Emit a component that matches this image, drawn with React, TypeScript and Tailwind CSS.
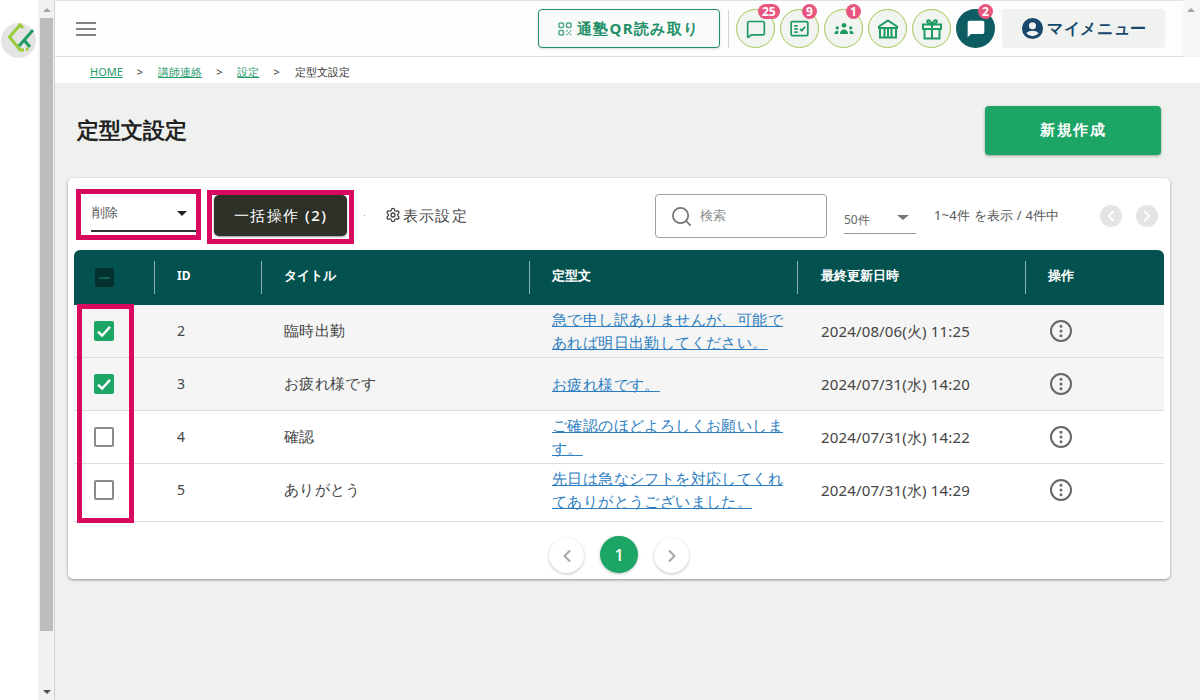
import React from "react";
import { ChevronLeft, ChevronRight, EllipsisVertical, Search, Settings, MessageSquare } from "lucide-react";

const rows = [
  { id: 2, title: "臨時出勤", body: ["急で申し訳ありませんが、可能で", "あれば明日出勤してください。"], date: "2024/08/06(火) 11:25", checked: true, h: "h-[53px]" },
  { id: 3, title: "お疲れ様です", body: ["お疲れ様です。"], date: "2024/07/31(水) 14:20", checked: true, h: "h-[53px]" },
  { id: 4, title: "確認", body: ["ご確認のほどよろしくお願いしま", "す。"], date: "2024/07/31(水) 14:22", checked: false, h: "h-[53px]" },
  { id: 5, title: "ありがとう", body: ["先日は急なシフトを対応してくれ", "てありがとうございました。"], date: "2024/07/31(水) 14:29", checked: false, h: "h-[58px]" },
];

const CircleBtn = ({ badge, children }: { badge?: string; children: React.ReactNode }) => (
  <div className="relative w-[39px] h-[39px] rounded-full border border-[#a3c94f] bg-[#f1f4f0] flex items-center justify-center text-[#1f9a63]">
    {children}
    {badge && (
      <span className="absolute top-[-6px] left-[21px] h-[15px] min-w-[15px] px-[4px] rounded-full bg-[#e8557f] text-white text-[12px] font-bold leading-[15px] text-center">
        {badge}
      </span>
    )}
  </div>
);

const Check = ({ checked }: { checked: boolean }) =>
  checked ? (
    <div className="w-5 h-5 rounded-[2px] bg-[#1da566] flex items-center justify-center">
      <svg width="18" height="18" viewBox="0 0 24 24" fill="none" stroke="white" strokeWidth="3.2">
        <path d="M4 13l5.5 5L20 6.5" />
      </svg>
    </div>
  ) : (
    <div className="w-5 h-5 rounded-[2px] border-2 border-[#8a8a8a] bg-white" />
  );

export default function App() {
  return (
    <div className="relative w-[1200px] h-[700px] overflow-hidden bg-[#eff1ee] font-['Roboto','Noto_Sans_CJK_JP',sans-serif] text-[#333]">
      {/* left rail */}
      <div className="absolute left-0 top-0 w-[38px] h-full bg-white">
        <div className="absolute left-[1px] top-[23px] w-[35px] h-[35px] rounded-full bg-[#e4e5e3]" />
        <svg className="absolute left-0 top-[21px]" width="38" height="40" viewBox="0 0 38 40" fill="none" strokeWidth="3">
          <path d="M23 7l-3-3L9.500 16l7.500 9 3 4h4" stroke="#9ccb3b" />
          <path d="M33 9L19 25" stroke="#1f9a63" />
          <path d="M24 19l6 7" stroke="#1f9a63" />
          <path d="M26 28h2.500" stroke="#9ccb3b" />
        </svg>
      </div>
      {/* scrollbar */}
      <div className="absolute left-[38px] top-0 w-[16px] h-full bg-[#f1f1f1]">
        <div className="absolute left-[2px] top-[18px] w-[13px] h-[613px] bg-[#bdbebc]" />
        <div className="absolute left-[5px] top-[8px] w-0 h-0 border-x-[4px] border-x-transparent border-b-[4px] border-b-[#a3a3a3]" />
        <div className="absolute left-[5px] top-[690px] w-0 h-0 border-x-[4px] border-x-transparent border-t-[4px] border-t-[#505050]" />
      </div>
      <div className="absolute left-[54px] top-0 w-px h-full bg-[#d2d3d1]" />

      {/* header */}
      <header className="absolute left-[55px] top-0 w-[1128px] h-[57px] bg-[#fdfdfd] border-t border-t-[#e2e2e2] border-b border-b-[#dcdcdc] flex items-center">
        <div className="absolute left-[21px] top-[21px] w-[20px] flex flex-col gap-[4px]">
          <div className="h-[2px] bg-[#808080]" />
          <div className="h-[2px] bg-[#808080]" />
          <div className="h-[2px] bg-[#808080]" />
        </div>
        <div className="absolute left-[483px] top-[8px] w-[182px] h-[39px] rounded-[4px] border border-[#1f8f68] bg-[#f8fbf9] flex items-center pl-[19px] gap-[5px] text-[#1f8f68] font-bold text-[15px] tracking-[1.3px] shadow-sm">
          <svg width="14" height="14" viewBox="0 0 14 14" fill="none" stroke="#55a888" strokeWidth="1.500">
            <rect x="1" y="1" width="4.500" height="4.500" rx="1" />
            <rect x="8.500" y="1" width="4.500" height="4.500" rx="1" />
            <rect x="1" y="8.500" width="4.500" height="4.500" rx="1" />
            <path d="M8.500 8.500l4.500 4.500M13 8.500l-4.500 4.500" strokeDasharray="1.500 1" />
          </svg>
          <span className="leading-[20px] mt-[-2px]">通塾QR読み取り</span>
        </div>
        <div className="absolute left-[673px] top-[9px] w-px h-[38px] bg-[#d5d5d5]" />
        <div className="absolute left-[681px] top-[8px] flex gap-[5px]">
          <CircleBtn badge="25"><MessageSquare size={20} strokeWidth={2} /></CircleBtn>
          <CircleBtn badge="9">
            <svg width="21" height="21" viewBox="0 0 24 24" fill="none" stroke="currentColor" strokeWidth="2">
              <rect x="2.500" y="4" width="19" height="16" rx="1.500" />
              <path d="M6 9h4M6 12.500h4M6 16h4" />
              <path d="M12.500 12.500l2 2 4-4.500" />
            </svg>
          </CircleBtn>
          <CircleBtn badge="1">
            <svg width="22" height="22" viewBox="0 0 24 24" fill="currentColor">
              <circle cx="12" cy="8" r="2.600" />
              <circle cx="4.600" cy="10.800" r="1.800" />
              <circle cx="19.400" cy="10.800" r="1.800" />
              <path d="M7.500 17.500c0-3 2-5 4.500-5s4.500 2 4.500 5z" />
              <path d="M1.500 17.500c0-2 1.200-3.500 3-3.500.7 0 1.200.2 1.700.5-.4.900-.6 1.900-.6 3z" />
              <path d="M22.500 17.500c0-2-1.200-3.500-3-3.500-.7 0-1.200.2-1.700.5.4.900.6 1.900.6 3z" />
            </svg>
          </CircleBtn>
          <CircleBtn>
            <svg width="24" height="24" viewBox="0 0 24 24" fill="none" stroke="currentColor" strokeWidth="2">
              <path d="M12 3.500l9 6v1.500H3V9.500z" />
              <path d="M4 11v9.500h16V11" />
              <path d="M8.500 11v9.500M12 11v9.500M15.500 11v9.500" />
            </svg>
          </CircleBtn>
          <CircleBtn>
            <svg width="24" height="24" viewBox="0 0 24 24" fill="none" stroke="currentColor" strokeWidth="2">
              <rect x="3" y="7.500" width="18" height="4.500" />
              <path d="M4.500 12v9.500h15V12" />
              <path d="M12 7.500v14" />
              <path d="M12 7.500C10.500 4 9 3 7.800 3.500S7 7 12 7.500zM12 7.500c1.500-3.500 3-4.500 4.200-4S17 7 12 7.500z" />
            </svg>
          </CircleBtn>
          <div className="relative w-[39px] h-[39px] rounded-full bg-[#0d5d63] flex items-center justify-center">
            <svg width="20" height="20" viewBox="0 0 24 24" fill="white">
              <path d="M4 2h16a2 2 0 012 2v12a2 2 0 01-2 2H6l-4 4V4a2 2 0 012-2z" />
            </svg>
            <span className="absolute top-[-5px] left-[22px] w-[15px] h-[15px] rounded-full bg-[#e8557f] text-white text-[12px] font-bold leading-[15px] text-center">2</span>
          </div>
        </div>
        <div className="absolute left-[947px] top-[8px] w-[163px] h-[39px] rounded-[4px] bg-[#eff2ef] flex items-center pl-[19px] gap-[3px] text-[#17476b] font-bold text-[16px] tracking-[0.7px]">
          <svg width="23" height="23" viewBox="0 0 24 24" fill="#17476b">
            <path d="M12 1a11 11 0 100 22 11 11 0 000-22zm0 4.500a3.700 3.700 0 110 7.400 3.700 3.700 0 010-7.400zM12 20a8.600 8.600 0 01-6.500-3c1.300-1.900 4.200-2.700 6.500-2.700s5.200.8 6.500 2.700A8.600 8.600 0 0112 20z" />
          </svg>
          <span className="leading-[20px] mt-[-2px]">マイメニュー</span>
        </div>
      </header>
      <div className="absolute left-[1183px] top-0 w-[17px] h-[56px] bg-[#f6f6f6]">
        <div className="absolute left-[4px] top-[8px] w-0 h-0 border-x-[4px] border-x-transparent border-b-[4px] border-b-[#a3a3a3]" />
      </div>

      {/* breadcrumb */}
      <nav className="absolute left-[55px] top-[57px] w-[1145px] h-[26px] bg-white text-[11px] text-[#333] flex items-center pl-[35px] pt-[4px]">
        <a className="text-[#1f9a6b] underline">HOME</a>
        <span className="ml-[14px]">&gt;</span>
        <a className="ml-[15px] text-[#1f9a6b] underline">講師連絡</a>
        <span className="ml-[14px]">&gt;</span>
        <a className="ml-[15px] text-[#1f9a6b] underline">設定</a>
        <span className="ml-[14px]">&gt;</span>
        <span className="ml-[15px]">定型文設定</span>
      </nav>

      <h1 className="absolute left-[77px] top-[114px] text-[22px] leading-[30px] font-bold text-[#222]">定型文設定</h1>
      <button className="absolute left-[985px] top-[106px] w-[176px] h-[49px] rounded-[4px] bg-[#1da566] text-white font-bold text-[15px] tracking-[1.5px] pb-[3px] shadow-[0_1px_3px_rgba(0,0,0,0.35)]">
        新規作成
      </button>

      {/* card */}
      <section className="absolute left-[68px] top-[178px] w-[1102px] h-[401px] rounded-[5px] bg-white shadow-[0_1px_3px_rgba(0,0,0,0.4)]">
        <div className="absolute left-[24px] top-[25px] text-[13px] text-[#555]">削除</div>
        <div className="absolute left-[109px] top-[33px] w-0 h-0 border-x-[5.5px] border-x-transparent border-t-[5px] border-t-[#222]" />
        <div className="absolute left-[23px] top-[52px] w-[105px] h-[2px] bg-[#333]" />
        <button className="absolute left-[146px] top-[17px] w-[133px] h-[41px] rounded-[5px] bg-[#2d3128] text-white text-[15px] font-medium tracking-[1.5px] shadow-[0_1px_2px_rgba(0,0,0,0.4)]">
          一括操作 (2)
        </button>
        <div className="absolute left-[296px] top-[37px] w-px h-px bg-[#999]" />
        <div className="absolute left-[317px] top-[26px] flex items-center gap-[2px] text-[15px] text-[#444] tracking-[1.2px]">
          <Settings size={16} />
          <span>表示設定</span>
        </div>
        <div className="absolute left-[587px] top-[16px] w-[172px] h-[44px] rounded-[4px] border border-[#a0a0a0] flex items-center pl-[14px] gap-[7px]">
          <Search size={23} strokeWidth={1.8} className="text-[#757575]" />
          <span className="text-[13px] text-[#8a8a8a]">検索</span>
        </div>
        <div className="absolute left-[776px] top-[32px] w-[72px] h-[24px] border-b border-b-[#999] text-[12px] text-[#666] leading-[20px]">50件</div>
        <div className="absolute left-[829px] top-[37px] w-0 h-0 border-x-[6px] border-x-transparent border-t-[5px] border-t-[#777]" />
        <div className="absolute left-[866px] top-[28px] text-[13px] tracking-[0.2px] text-[#555]">1~4件 を表示 / 4件中</div>
        <div className="absolute left-[1032px] top-[27px] w-[22px] h-[22px] rounded-full bg-[#e4e4e4] flex items-center justify-center text-white">
          <ChevronLeft size={18} strokeWidth={2.5} />
        </div>
        <div className="absolute left-[1068px] top-[27px] w-[22px] h-[22px] rounded-full bg-[#e4e4e4] flex items-center justify-center text-white">
          <ChevronRight size={18} strokeWidth={2.5} />
        </div>

        {/* table */}
        <div className="absolute left-[6px] top-[72px] w-[1090px]">
          <div className="relative h-[55px] rounded-t-[6px] bg-[#04524f] text-white text-[13px] font-bold">
            <div className="absolute left-[21px] top-[18px] w-[19px] h-[19px] rounded-[2px] bg-[#04302f] flex items-center justify-center">
              <div className="w-[11px] h-[2px] bg-[#0c5f5a]" />
            </div>
            <div className="absolute left-[80px] top-[11px] w-px h-[33px] bg-[#8fb3b1]" />
            <div className="absolute left-[103px] top-[17px] text-[12px]">ID</div>
            <div className="absolute left-[187px] top-[11px] w-px h-[33px] bg-[#8fb3b1]" />
            <div className="absolute left-[210px] top-[16px]">タイトル</div>
            <div className="absolute left-[455px] top-[11px] w-px h-[33px] bg-[#8fb3b1]" />
            <div className="absolute left-[478px] top-[16px]">定型文</div>
            <div className="absolute left-[723px] top-[11px] w-px h-[33px] bg-[#8fb3b1]" />
            <div className="absolute left-[747px] top-[16px]">最終更新日時</div>
            <div className="absolute left-[951px] top-[11px] w-px h-[33px] bg-[#8fb3b1]" />
            <div className="absolute left-[974px] top-[16px]">操作</div>
          </div>
          {rows.map((r) => (
            <div key={r.id} className={`relative ${r.h} border-b border-b-[#dcdcdc] text-[15px] text-[#444] ${r.checked ? "bg-[#f5f5f5]" : "bg-white"}`}>
              <div className="absolute left-[20px] top-[16px]"><Check checked={r.checked} /></div>
              <div className="absolute left-[103px] top-[16px] text-[14px] leading-[20px]">{r.id}</div>
              <div className="absolute left-[210px] top-[15px] leading-[20px] tracking-[0.35px]">{r.title}</div>
              <div className={`absolute left-[478px] ${r.body.length === 1 ? "top-[15px]" : "top-[3px]"} leading-[23px] tracking-[0.4px] text-[#2b7dbf]`}>
                {r.body.map((line) => (
                  <div key={line} className="underline">{line}</div>
                ))}
              </div>
              <div className="absolute left-[747px] top-[16px] leading-[20px] tracking-[0.15px]">{r.date}</div>
              <div className="absolute left-[976px] top-[15px] w-[22px] h-[22px] rounded-full border-2 border-[#666] flex items-center justify-center text-[#666]">
                <EllipsisVertical size={16} strokeWidth={2.5} />
              </div>
            </div>
          ))}
        </div>

        {/* pagination */}
        <div className="absolute left-[481px] top-[360px] w-[35px] h-[35px] rounded-full bg-white shadow-[0_1px_3px_rgba(0,0,0,0.25)] flex items-center justify-center text-[#a8a8a8]">
          <ChevronLeft size={20} strokeWidth={2.5} />
        </div>
        <div className="absolute left-[532px] top-[358px] w-[38px] h-[37px] rounded-full bg-[#1da566] shadow-[0_1px_3px_rgba(0,0,0,0.25)] flex items-center justify-center text-white font-medium text-[17px]">
          1
        </div>
        <div className="absolute left-[586px] top-[360px] w-[35px] h-[35px] rounded-full bg-white shadow-[0_1px_3px_rgba(0,0,0,0.25)] flex items-center justify-center text-[#a8a8a8]">
          <ChevronRight size={20} strokeWidth={2.5} />
        </div>
      </section>

      {/* annotation frames */}
      <div className="absolute left-[76px] top-[189px] w-[125px] h-[51px] border-[5px] border-[#d9095f]" />
      <div className="absolute left-[207px] top-[190px] w-[147px] h-[54px] border-[5px] border-[#d9095f]" />
      <div className="absolute left-[77px] top-[304px] w-[57px] h-[219px] border-[5px] border-[#d9095f]" />
    </div>
  );
}
